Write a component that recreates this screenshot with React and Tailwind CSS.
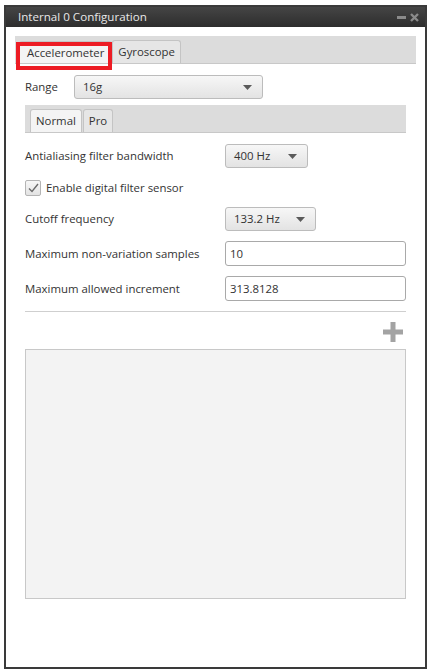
import { useState } from 'react';

function Caret() {
  return (
    <svg width="9" height="5" viewBox="0 0 9 5" className="shrink-0">
      <path d="M0 0 H9 L4.5 5 Z" fill="#5a5a5a" />
    </svg>
  );
}

function Select({ value, className }) {
  return (
    <div
      className={`flex items-center justify-between rounded-[3px] border border-[#bcbcbc] bg-gradient-to-b from-[#f7f7f7] to-[#e3e3e3] pl-[8px] pr-[10px] text-[11.4px] text-[#333] ${className}`}
    >
      <span>{value}</span>
      <Caret />
    </div>
  );
}

function Field({ value }) {
  return (
    <div className="flex h-[25px] w-[181px] items-center rounded-[3px] border border-[#a9a9a9] bg-white pl-[4px] text-[11.4px] text-[#333]">
      {value}
    </div>
  );
}

function Tab({ label, active, className = '' }) {
  return (
    <div
      className={`flex items-center rounded-t-[3px] border border-b-0 border-[#c4c4c4] px-[5px] text-[11.4px] text-[#333] ${
        active ? 'bg-[#f4f4f4]' : 'bg-[#e6e6e6]'
      } ${className}`}
    >
      {label}
    </div>
  );
}

export default function App() {
  const [checked] = useState(true);

  return (
    <div className="h-[672px] w-[430px] bg-white pl-[4px] pt-[5px]" style={{ fontFamily: '"Open Sans", "Noto Sans", sans-serif' }}>
      <div className="flex h-[664px] w-[423px] flex-col border-2 border-[#3a3a3a] bg-white">
        {/* title bar */}
        <div className="flex h-[20px] shrink-0 items-center justify-between bg-gradient-to-b from-[#454545] to-[#2d2d2d] pl-[12px] pr-[6px]">
          <span className="text-[11.6px] text-[#e8e8e8]">Internal 0 Configuration</span>
          <div className="flex items-center gap-[4px]">
            <div className="h-[3px] w-[9px] bg-[#8a8a8a]" />
            <svg width="9" height="9" viewBox="0 0 9 9">
              <path d="M1 1 L8 8 M8 1 L1 8" stroke="#8a8a8a" strokeWidth="2.4" />
            </svg>
          </div>
        </div>

        <div className="relative flex flex-1 flex-col pl-[9px] pr-[9px] pt-[9px]">
          {/* outer tabs */}
          <div className="flex h-[28px] w-[401px] items-end border-b border-[#c8c8c8] bg-[#dcdcdc] pl-[4px]">
            <Tab label="Accelerometer" active className="h-[22px] px-[7px]" />
            <Tab label="Gyroscope" className="h-[23px]" />
          </div>
          {/* highlight frame around the active tab */}
          <div className="pointer-events-none absolute left-[10px] top-[15px] h-[28px] w-[96px] border-4 border-[#ed1c24]" />

          <div className="flex flex-col pl-[10px] pr-[10px]">
            {/* range */}
            <div className="mt-[11px] flex h-[24px] items-center">
              <span className="w-[49px] text-[11.4px] text-[#333]">Range</span>
              <Select value="16g" className="h-[24px] w-[189px]" />
            </div>

            {/* inner tabs */}
            <div className="mt-[6px] flex h-[28px] w-[381px] items-end border-b border-[#c8c8c8] bg-[#dcdcdc] pl-[5px]">
              <Tab label="Normal" active className="h-[23px]" />
              <Tab label="Pro" className="ml-[1px] h-[23px]" />
            </div>

            <div className="mt-[11px] flex h-[24px] items-center">
              <span className="w-[200px] text-[11.4px] text-[#333]">Antialiasing filter bandwidth</span>
              <Select value="400 Hz" className="h-[24px] w-[83px]" />
            </div>

            <div className="mt-[11px] flex h-[17px] items-center">
              <div className="flex h-[16px] w-[16px] items-center justify-center rounded-[2px] border border-[#b4b4b4] bg-gradient-to-b from-[#f7f7f7] to-[#e3e3e3]">
                {checked && (
                  <svg width="11" height="10" viewBox="0 0 11 10">
                    <path d="M1 5.5 L4 8.5 L10 1" fill="none" stroke="#6a6a6a" strokeWidth="1.4" />
                  </svg>
                )}
              </div>
              <span className="ml-[5px] text-[11.4px] text-[#333]">Enable digital filter sensor</span>
            </div>

            <div className="mt-[11px] flex h-[24px] items-center">
              <span className="w-[200px] text-[11.4px] text-[#333]">Cutoff frequency</span>
              <Select value="133.2 Hz" className="h-[24px] w-[91px]" />
            </div>

            <div className="mt-[10px] flex h-[25px] items-center">
              <span className="w-[200px] text-[11.4px] text-[#333]">Maximum non-variation samples</span>
              <Field value="10" />
            </div>

            <div className="mt-[10px] flex h-[25px] items-center">
              <span className="w-[200px] text-[11.4px] text-[#333]">Maximum allowed increment</span>
              <Field value="313.8128" />
            </div>

            <div className="mt-[10px] h-px w-[381px] bg-[#cfcfcf]" />

            <div className="flex w-[381px] justify-end pr-[3px] pt-[10px]">
              <svg width="20" height="20" viewBox="0 0 20 20">
                <path d="M7.5 0 H12.5 V7.5 H20 V12.5 H12.5 V20 H7.5 V12.5 H0 V7.5 H7.5 Z" fill="#a3a3a3" />
              </svg>
            </div>

            <div className="mt-[7px] h-[250px] w-[381px] border border-[#c8c8c8] bg-[#f3f3f3]" />
          </div>
        </div>
      </div>
    </div>
  );
}
